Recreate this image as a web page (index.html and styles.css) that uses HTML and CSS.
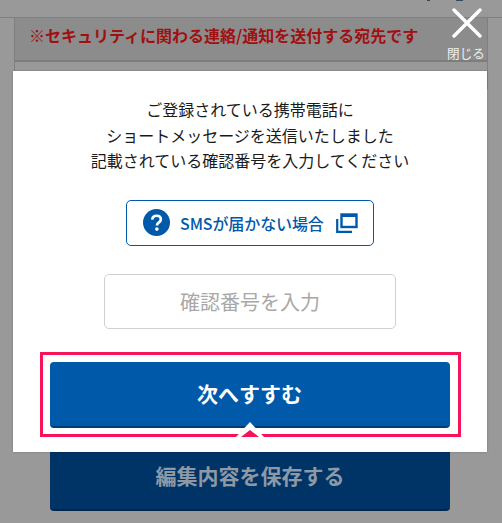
FILE: index.html
```html
<!DOCTYPE html>
<html lang="ja">
<head>
    <meta charset="UTF-8">
    <meta name="viewport" content="width=device-width, initial-scale=1.0">
    <title>確認番号の入力</title>
    <link rel="stylesheet" href="styles.css">
</head>
<body>

<!-- 背面のページ -->
<div class="page">
    <div class="topbar">
        <span class="topbar-mark topbar-mark-a"></span>
        <span class="topbar-mark topbar-mark-b"></span>
    </div>
    <div class="form">
        <div class="notice">※セキュリティに関わる連絡/通知を送付する宛先です</div>
    </div>
    <div class="save-button">編集内容を保存する</div>
</div>

<!-- 閉じるボタン -->
<div class="close">
    <svg class="close-icon" viewBox="0 0 30 30" width="30" height="30">
        <path d="M2 2 L28 28 M28 2 L2 28" fill="none" stroke="#fff" stroke-width="3.4" stroke-linecap="round"/>
    </svg>
    <span class="close-label">閉じる</span>
</div>

<!-- モーダル -->
<div class="modal">
    <p class="message">ご登録されている携帯電話に<br>ショートメッセージを送信いたしました<br>記載されている確認番号を入力してください</p>

    <a class="sms-link">
        <svg class="help-icon" viewBox="0 0 28 28" width="27" height="27">
            <circle cx="14" cy="14" r="14" fill="#0059a9"/>
            <path d="M9.6 11 C9.8 8.4 11.6 7 14.1 7 C16.7 7 18.5 8.5 18.5 10.7 C18.5 12.4 17.6 13.3 16.3 14.2 C15 15.1 14.5 15.7 14.5 17" fill="none" stroke="#fff" stroke-width="2.8"/>
            <circle cx="14.4" cy="20.8" r="1.9" fill="#fff"/>
        </svg>
        <span class="sms-text">SMSが届かない場合</span>
        <svg class="window-icon" viewBox="0 0 22 20" width="22" height="20">
            <path d="M1.2 6 V18.8 H16" fill="none" stroke="#0059a9" stroke-width="2.2"/>
            <rect x="5.5" y="1.5" width="15" height="12.5" fill="none" stroke="#0059a9" stroke-width="2.4"/>
            <rect x="5.5" y="1" width="15" height="3" fill="#0059a9"/>
        </svg>
    </a>

    <input class="code-input" type="text" placeholder="確認番号を入力">

    <div class="highlight">
        <div class="next-button">次へすすむ</div>
        <svg class="highlight-arrow" viewBox="0 0 30 15" width="30" height="15">
            <path d="M1 15 L15 0 L29 15 Z" fill="#fff"/>
            <path d="M6 15 L15 8 L24 15 Z" fill="#f5135a"/>
        </svg>
    </div>
</div>

</body>
</html>
```

FILE: styles.css
```css
* {
    box-sizing: border-box;
}
body {
    margin: 0;
    padding: 0;
    background-color: #999999;
    font-family: "Noto Sans CJK JP", "Noto Sans", sans-serif;
    overflow: hidden;
}
.page {
    height: 523px;
    display: flex;
    flex-direction: column;
}
.topbar {
    position: relative;
    height: 18px;
    border-bottom: 1px solid #7f7f7f;
    flex-shrink: 0;
}
.topbar-mark {
    position: absolute;
    top: 0;
    height: 1px;
    background-color: #34495f;
}
.topbar-mark-a {
    left: 427px;
    width: 3px;
}
.topbar-mark-b {
    left: 456px;
    width: 7px;
}
.form {
    height: 71px;
    margin: 0 14px;
    border-left: 1px solid #808080;
    border-right: 1px solid #808080;
    flex-shrink: 0;
}
.notice {
    height: 44px;
    padding-left: 14px;
    background-color: #8c8c8c;
    border-bottom: 2px solid #7d7d7d;
    color: #a01010;
    font-size: 16px;
    font-weight: 700;
    line-height: 34px;
    white-space: nowrap;
}
.save-button {
    width: 400px;
    height: 70px;
    margin: 352px 0 0 50px;
    background-color: #003366;
    border-bottom: 2px solid #00264c;
    border-radius: 4px;
    color: #8e99a6;
    font-size: 21px;
    font-weight: 700;
    display: flex;
    align-items: center;
    justify-content: center;
    flex-shrink: 0;
}
.modal {
    position: absolute;
    top: 71px;
    left: 13px;
    width: 474px;
    height: 381px;
    padding-top: 26px;
    background-color: #ffffff;
    box-shadow: 0 0 2px rgba(0, 0, 0, 0.25);
    display: flex;
    flex-direction: column;
    align-items: center;
}
.message {
    margin: 0;
    color: #1a1a1a;
    font-size: 16px;
    line-height: 25.5px;
    text-align: center;
}
.sms-link {
    width: 248px;
    height: 46px;
    margin-top: 26px;
    padding-left: 16px;
    border: 1.5px solid #0059a9;
    border-radius: 5px;
    display: flex;
    align-items: center;
    color: #0059a9;
    font-size: 16px;
    font-weight: 500;
}
.help-icon {
    flex-shrink: 0;
}
.sms-text {
    margin-left: 10px;
    letter-spacing: -0.1px;
    white-space: nowrap;
}
.window-icon {
    margin-left: 12px;
    flex-shrink: 0;
}
.code-input {
    display: block;
    width: 292px;
    height: 55px;
    margin-top: 28px;
    border: 1.5px solid #d0d0d0;
    border-radius: 5px;
    background-color: #ffffff;
    font-family: inherit;
    font-size: 20px;
    text-align: center;
}
.code-input::placeholder {
    color: #a8a8a8;
    opacity: 1;
}
.highlight {
    position: relative;
    width: 421px;
    height: 85px;
    margin-top: 23px;
    padding: 7px;
    border: 3px solid #f5135a;
}
.next-button {
    width: 400px;
    height: 66px;
    background-color: #0059a9;
    border-bottom: 2px solid #003c75;
    border-radius: 4px;
    color: #ffffff;
    font-size: 21px;
    font-weight: 700;
    line-height: 62px;
    text-align: center;
}
.highlight-arrow {
    position: absolute;
    left: 192px;
    bottom: -3px;
}
.close {
    position: absolute;
    top: 8px;
    left: 447px;
    width: 38px;
    display: flex;
    flex-direction: column;
    align-items: center;
}
.close-icon {
    margin-left: 1px;
}
.close-label {
    margin-top: 5px;
    color: #eeeeee;
    font-size: 12.6px;
    line-height: 19px;
    white-space: nowrap;
}
```
